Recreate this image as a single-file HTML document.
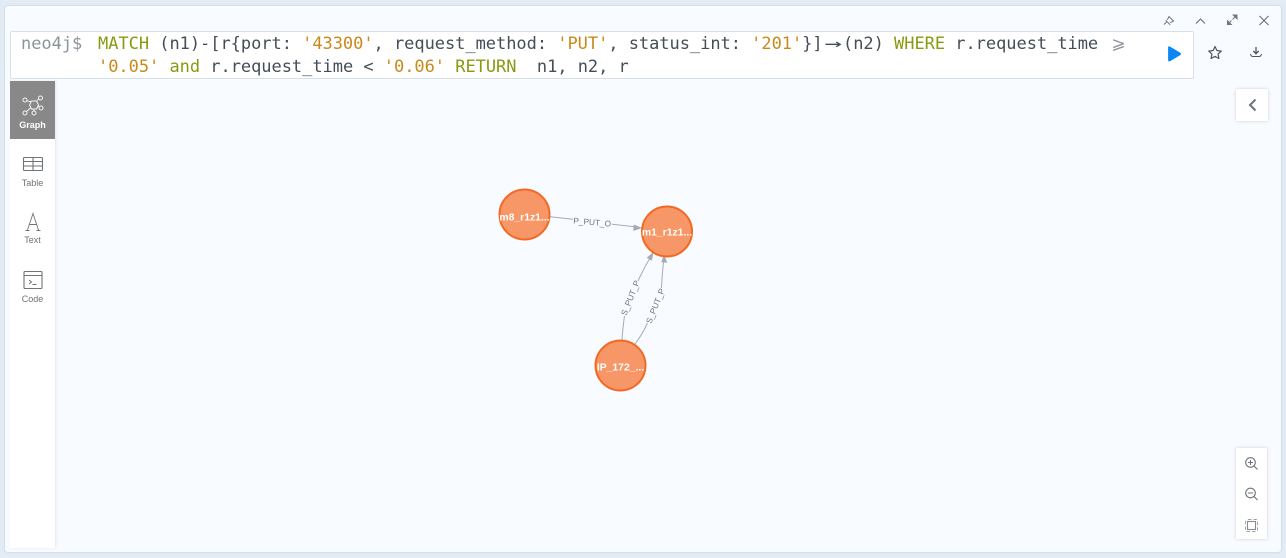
<!DOCTYPE html>
<html><head><meta charset="utf-8">
<style>
html,body{margin:0;padding:0;width:1286px;height:558px;overflow:hidden;background:#e3ebf4;}
*{box-sizing:border-box}
.a{position:absolute}
#panel{left:5px;top:6px;width:1276px;height:546px;background:#f8fbff;border-radius:3px;box-shadow:0 0 2px rgba(120,140,160,.35)}
#editor{left:10px;top:31px;width:1184px;height:48px;background:#fff;border:1px solid #d5e0ea;border-radius:2px}
.code{font-family:"DejaVu Sans Mono","Liberation Mono",monospace;font-size:17px;letter-spacing:-.03px;white-space:pre;color:#444d58;line-height:20px}
.k{color:#8a9a10}.s{color:#c98a1b}.g{color:#8a949e}
.lig{display:inline-block;width:20.4px;text-align:center;overflow:visible}
#side{left:10px;top:81px;width:45px;height:467px;background:#fff;box-shadow:1px 0 2px rgba(180,190,200,.3)}
#act{left:10px;top:81px;width:45px;height:58px;background:#888}
.lbl{font-family:"Liberation Sans",sans-serif;font-size:9px;width:45px;left:10px;text-align:center;color:#717172}
.box{background:#fff;box-shadow:0 0 3px rgba(150,160,170,.45);border-radius:1px}
svg{position:absolute;left:0;top:0}
</style></head><body>
<div class="a" id="panel"></div>
<div class="a" id="editor"></div>
<div class="a code g" style="left:21px;top:34px">neo4j$</div>
<div class="a code" style="left:98px;top:34px"><span class="k">MATCH</span> (n1)-[r{port: <span class="s">'43300'</span>, request_method: <span class="s">'PUT'</span>, status_int: <span class="s">'201'</span>}]<span class="lig" style="transform:scaleX(1.7)">→</span>(n2) <span class="k">WHERE</span> r.request_time <span class="lig g">⩾</span></div>
<div class="a code" style="left:98px;top:57px"><span class="s">'0.05'</span> <span class="k">and</span> r.request_time &lt; <span class="s">'0.06'</span> <span class="k">RETURN</span>  n1, n2, r</div>
<div class="a" id="side"></div>
<div class="a" id="act"></div>
<div class="a lbl" style="top:120px;color:#fff;font-weight:bold">Graph</div>
<div class="a lbl" style="top:178px">Table</div>
<div class="a lbl" style="top:235px">Text</div>
<div class="a lbl" style="top:294px">Code</div>
<div class="a box" style="left:1236px;top:89px;width:32px;height:32px"></div>
<div class="a box" style="left:1236px;top:448px;width:31px;height:91px"></div>
<svg width="1286" height="558" viewBox="0 0 1286 558" fill="none">
  <!-- window controls -->
  <g stroke="#5f6b76" stroke-width="1">
    <path d="M1164 24.500l3.200-3.200M1165.700 20.300l4.500 4.500M1167.300 19.800l1.700-3.300 4.500 4.500-3.300 1.700" stroke-width=".9"/>
    <path d="M1196 23.500l4.500-4.500 4.500 4.500"/>
    <path d="M1228.500 23.500l3-3M1232.500 19.500l3-3" stroke="#6d7883"/>
    <path d="M1237.500 14.500v5.500l-5.500-5.500zM1227 25v-5.500l5.500 5.500z" fill="#6d7883" stroke="none"/>
    <path d="M1259.500 16l9 9M1268.500 16l-9 9"/>
  </g>
  <!-- play -->
  <path d="M1168.500 46.500v13.500q0 1.500 1.500 .8l10-6q1.300-1-.1-1.800l-10-6q-1.400-.7-1.400 1.500z" fill="#0a87f5" stroke="#0a87f5" stroke-width=".8"/>
  <!-- star -->
  <path d="M1215 46.500l1.900 4 4.400.6-3.200 3 .8 4.400-3.900-2.100-3.900 2.100.8-4.400-3.200-3 4.400-.6z" stroke="#4d5660" stroke-width="1.200" stroke-linejoin="round"/>
  <!-- download -->
  <path d="M1256 47v6.500M1253.300 51l2.700 2.700 2.700-2.700" stroke="#4d5660" stroke-width="1.300"/>
  <path d="M1250.500 54q.5 2.500 2.500 2.500h6q2 0 2.500-2.500" stroke="#4d5660" stroke-width="1"/>
  <!-- collapse chevron -->
  <path d="M1255.500 99.500l-5.500 5.500 5.500 5.500" stroke="#6a7580" stroke-width="2"/>
  <!-- graph icon -->
  <g stroke="#fff" stroke-width="1" opacity=".9">
    <path d="M31.500 101h5l2 4-2 4h-5l-2-4z"/>
    <circle cx="25" cy="100" r="2"/><circle cx="40.500" cy="98" r="2"/><circle cx="41" cy="108" r="2"/><circle cx="34" cy="113" r="2"/><circle cx="25" cy="113" r="2"/>
    <path d="M26.800 100.700l4.700 1.300M37 100.500l2-1.500M38.300 106l1 1M34 111v-2M26.500 111.500l4-3.500"/>
  </g>
  <!-- table icon -->
  <g stroke="#6f7479" stroke-width="1.100">
    <rect x="23.500" y="157.500" width="19" height="13" rx="1"/>
    <path d="M23.500 161.500h19M23.500 166h19M33 157.500v13" />
  </g>
  <!-- text icon -->
  <g stroke="#6f7479" stroke-width=".9">
    <path d="M27.500 230l5.500-16.500 5.500 16.500M29.300 224.500h7.500M25.500 230.500h4M36.500 230.500h4"/>
  </g>
  <!-- code icon -->
  <g stroke="#6f7479" stroke-width="1.100">
    <rect x="24" y="271.500" width="18" height="17" rx="1"/>
    <path d="M24 275.500h18"/>
    <path d="M29 280l2.500 2-2.500 2M32.500 284.500h4" stroke-width="1"/>
  </g>
  <!-- zoom controls -->
  <g stroke="#6a737c" stroke-width="1.100">
    <circle cx="1250.500" cy="462.500" r="4.800"/><path d="M1254 466l3.500 3.500M1248 462.500h5M1250.500 460v5"/>
    <circle cx="1250.500" cy="493" r="4.800"/><path d="M1254 496.500l3.500 3.500M1248 493h5"/>
    <rect x="1247.500" y="521.500" width="8" height="8" stroke="#858c93"/>
    <rect x="1245.500" y="519.500" width="12" height="12" rx="1.500" stroke-dasharray="3.500 2" stroke-dashoffset="-1" stroke-width=".9" stroke="#9aa0a6"/>
  </g>
  <!-- edges -->
  <g stroke="#a5abb6" stroke-width="1">
    <path d="M550 216.800L573 219.200M612 224.300L635 226.800"/>
    <path d="M622 340Q622.500 330 624.500 316M638 281Q644 268 649.500 259"/>
    <path d="M635 344Q642 335 647.500 323M661.500 288Q662 276 663.500 262"/>
  </g>
  <g fill="#a5abb6">
    <path d="M642 228l-8.800 3 .6-6.500z"/>
    <path d="M653.500 252l-1.600 8.700-5.200-3z"/>
    <path d="M664 254.500l3.300 8.300-6.100-.5z"/>
  </g>
  <g font-family="Liberation Sans,sans-serif" font-size="8.300" fill="#6e747c" text-anchor="middle">
    <text transform="translate(592 225) rotate(5)">P_PUT_O</text>
    <text transform="translate(633 299) rotate(-68)">S_PUT_P</text>
    <text transform="translate(658 307) rotate(-68)">S_PUT_P</text>
  </g>
  <!-- nodes -->
  <g fill="#f79767" stroke="#f36924" stroke-width="2">
    <circle cx="524.500" cy="214.500" r="25"/>
    <circle cx="667" cy="231.500" r="25"/>
    <circle cx="620.500" cy="365.500" r="25"/>
  </g>
  <g font-family="Liberation Sans,sans-serif" font-size="10.400" font-weight="bold" fill="#fff" text-anchor="middle">
    <text x="524.500" y="220.500">m8_r1z1...</text>
    <text x="667" y="235.500">m1_r1z1...</text>
    <text x="620.500" y="370.500">IP_172_...</text>
  </g>
</svg>
</body></html>
